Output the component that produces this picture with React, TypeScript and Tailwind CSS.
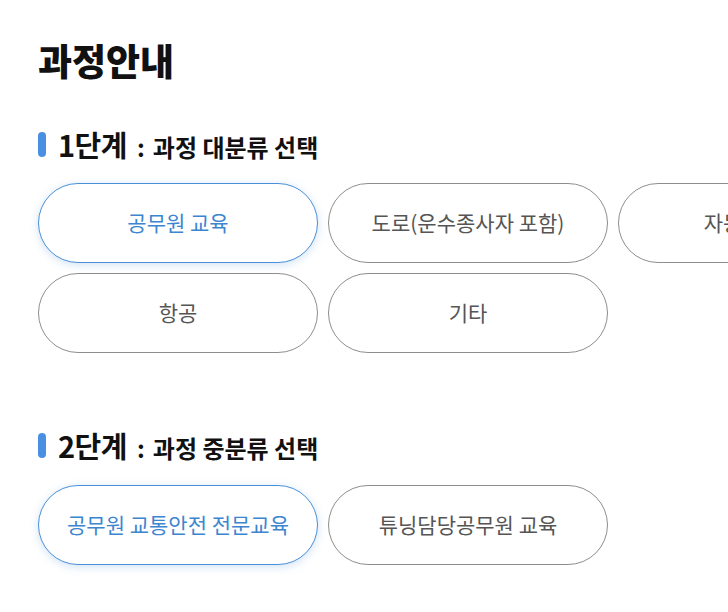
import React from "react";

const font = { fontFamily: '"Noto Sans CJK KR", "Noto Sans", sans-serif' };

function Pill({ label, active }: { label: string; active?: boolean }) {
  return (
    <button
      className={
        active
          ? "w-[280px] h-[80px] shrink-0 rounded-full border border-[#4a90d9] bg-white text-[21px] text-[#3d86cf] shadow-[0_2px_8px_rgba(74,144,217,0.25)]"
          : "w-[280px] h-[80px] shrink-0 rounded-full border border-[#8e8e8e] bg-white text-[21px] text-[#555555]"
      }
      style={font}
    >
      {label}
    </button>
  );
}

function Header({ step, text }: { step: string; text: string }) {
  return (
    <div className="flex items-center gap-[12px] h-[30px]">
      <span className="w-[8px] h-[25px] rounded-full bg-[#4a90e2]" />
      <h3 className="flex items-baseline font-bold text-[#111] leading-none" style={font}>
        <span className="text-[29px] tracking-[-0.5px]">{step}</span>
        <span className="text-[24px] ml-[10px]">:</span>
        <span className="text-[24px] ml-[8px]">{text}</span>
      </h3>
    </div>
  );
}

export default function App() {
  return (
    <div className="w-[728px] h-[612px] overflow-hidden bg-white" style={font}>
      <div className="w-[1300px] pl-[38px] pt-[35px]">
        <h1 className="text-[37px] font-black text-[#111] leading-[50px]" style={font}>
          과정안내
        </h1>
        <div className="mt-[44px]">
          <Header step="1단계" text="과정 대분류 선택" />
          <div className="mt-[24px] grid grid-cols-[repeat(4,280px)] gap-[10px]">
            <Pill label="공무원 교육" active />
            <Pill label="도로(운수종사자 포함)" />
            <Pill label="자동차·철도" />
            <Pill label="철도" />
            <Pill label="항공" />
            <Pill label="기타" />
          </div>
        </div>
        <div className="mt-[77px]">
          <Header step="2단계" text="과정 중분류 선택" />
          <div className="mt-[25px] flex gap-[10px]">
            <Pill label="공무원 교통안전 전문교육" active />
            <Pill label="튜닝담당공무원 교육" />
          </div>
        </div>
      </div>
    </div>
  );
}
